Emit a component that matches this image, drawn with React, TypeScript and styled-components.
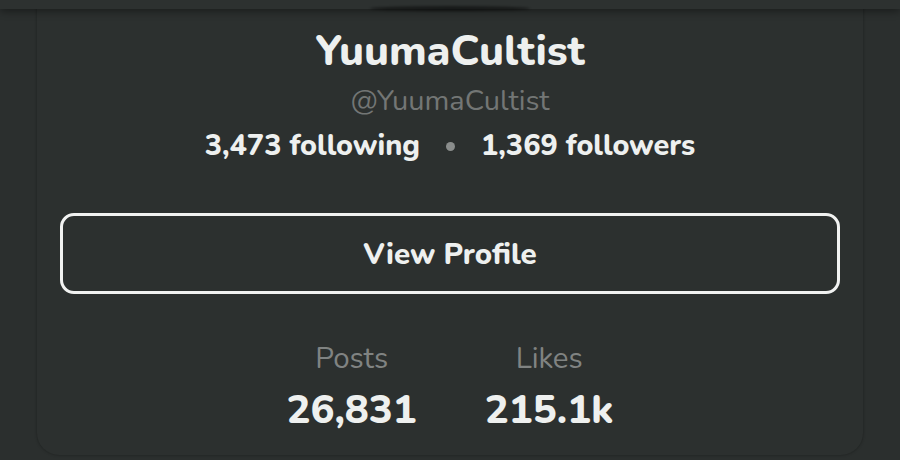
import React from 'react';
import styled, {createGlobalStyle} from 'styled-components';

const GlobalStyle = createGlobalStyle`
  html, body {
    margin: 0;
    padding: 0;
    background: #2b2f2e;
  }
  body {
    font-family: Nunito, Lato, "Noto Sans", sans-serif;
    color: #eef0ef;
  }
`;

const stats = [
  {label: 'Posts', value: '26,831'},
  {label: 'Likes', value: '215.1k'},
];

export default function App() {
  return (
    <>
      <GlobalStyle />
      <Styled.Page>
        <Styled.TopBar>
          <Styled.AvatarShadow />
        </Styled.TopBar>
        <Styled.Card>
          <Styled.Name>YuumaCultist</Styled.Name>
          <Styled.Handle>@YuumaCultist</Styled.Handle>
          <Styled.Follows>
            <span>3,473 following</span>
            <Styled.Dot />
            <span>1,369 followers</span>
          </Styled.Follows>
          <Styled.ProfileButton>View Profile</Styled.ProfileButton>
          <Styled.Stats>
            {stats.map((s) => (
              <Styled.Stat key={s.label}>
                <Styled.StatLabel>{s.label}</Styled.StatLabel>
                <Styled.StatValue>{s.value}</Styled.StatValue>
              </Styled.Stat>
            ))}
          </Styled.Stats>
        </Styled.Card>
      </Styled.Page>
    </>
  );
}

const Styled = {
  Page: styled.div`
    width: 900px;
    height: 460px;
    overflow: hidden;
    position: relative;
  `,
  TopBar: styled.header`
    position: absolute;
    top: 0;
    left: 0;
    right: 0;
    height: 9px;
    background: #2d3130;
    box-shadow: 0 2px 8px rgba(0, 0, 0, 0.45);
    z-index: 2;
  `,
  AvatarShadow: styled.div`
    position: absolute;
    left: 370px;
    top: 6px;
    width: 160px;
    height: 5px;
    border-radius: 50%;
    background: rgba(0, 0, 0, 0.45);
    filter: blur(1px);
  `,
  Card: styled.section`
    margin: 0 37px;
    height: 455px;
    box-sizing: border-box;
    padding: 26px 23px 0;
    border-radius: 0 0 22px 22px;
    background: #2c302f;
    box-shadow: 0 0 3px rgba(0, 0, 0, 0.35);
    display: flex;
    flex-direction: column;
    align-items: center;
  `,
  Name: styled.h1`
    margin: 0;
    font-size: 42.5px;
    line-height: 50px;
    font-weight: 800;
  `,
  Handle: styled.div`
    margin-top: 8px;
    font-size: 29px;
    line-height: 34px;
    color: #737675;
  `,
  Follows: styled.div`
    margin-top: 11px;
    display: flex;
    align-items: center;
    gap: 26px;
    font-size: 28.8px;
    line-height: 34px;
    font-weight: 800;
  `,
  Dot: styled.span`
    width: 9px;
    height: 9px;
    border-radius: 50%;
    background: #8a8d8c;
  `,
  ProfileButton: styled.button`
    margin-top: 50px;
    width: 100%;
    height: 81px;
    box-sizing: border-box;
    border: 3px solid #f1f2f1;
    border-radius: 14px;
    background: transparent;
    color: #eef0ef;
    font-family: inherit;
    font-size: 29.5px;
    font-weight: 800;
  `,
  Stats: styled.div`
    margin-top: 46px;
    display: flex;
    gap: 68px;
  `,
  Stat: styled.div`
    display: flex;
    flex-direction: column;
    align-items: center;
  `,
  StatLabel: styled.div`
    font-size: 29.5px;
    line-height: 36px;
    color: #808382;
  `,
  StatValue: styled.div`
    margin-top: 10px;
    font-size: 40px;
    line-height: 48px;
    font-weight: 800;
  `,
};
